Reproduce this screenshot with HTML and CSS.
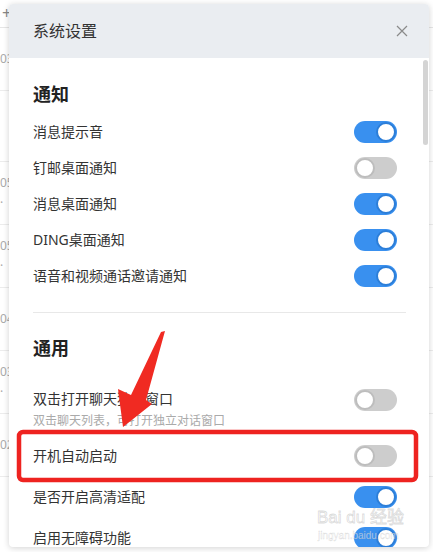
FILE: index.html
```html
<!DOCTYPE html>
<html lang="zh-CN">
<head>
    <meta charset="UTF-8">
    <meta name="viewport" content="width=device-width, initial-scale=1.0">
    <title>系统设置</title>
    <link rel="stylesheet" href="styles.css">
</head>
<body>
    <div class="backdrop">
        <div class="bg-top"><span class="plus">+</span></div>
        <div class="bg-item"><span>03</span></div>
        <div class="bg-item tall"></div>
        <div class="bg-item"><span>05</span><span>·</span></div>
        <div class="bg-item"><span>05</span><span>·</span></div>
        <div class="bg-item"><span>04</span></div>
        <div class="bg-item"><span>03</span><span>·</span></div>
        <div class="bg-item"><span>02</span></div>
    </div>

    <div class="dialog">
        <div class="dialog-head">
            <span class="title">系统设置</span>
            <svg class="close" width="12" height="12" viewBox="0 0 12 12">
                <path d="M1 1 L11 11 M11 1 L1 11" stroke="#8a8a8a" stroke-width="1.2" fill="none"/>
            </svg>
        </div>
        <div class="dialog-body">
            <div class="thumb"></div>

            <section class="group">
                <h3>通知</h3>
                <div class="row"><span>消息提示音</span><i class="switch on"><b></b></i></div>
                <div class="row"><span>钉邮桌面通知</span><i class="switch"><b></b></i></div>
                <div class="row"><span>消息桌面通知</span><i class="switch on"><b></b></i></div>
                <div class="row"><span>DING桌面通知</span><i class="switch on"><b></b></i></div>
                <div class="row"><span>语音和视频通话邀请通知</span><i class="switch on"><b></b></i></div>
            </section>

            <hr class="divider">

            <section class="group general">
                <h3>通用</h3>
                <div class="row double">
                    <div class="label">
                        <span>双击打开聊天独立窗口</span>
                        <small>双击聊天列表，可打开独立对话窗口</small>
                    </div>
                    <i class="switch"><b></b></i>
                </div>
                <div class="row wide"><span>开机自动启动</span><i class="switch"><b></b></i></div>
                <div class="row wide"><span>是否开启高清适配</span><i class="switch on"><b></b></i></div>
                <div class="row wide last"><span>启用无障碍功能</span><i class="switch on"><b></b></i></div>
            </section>
        </div>
    </div>

    <svg class="marks" width="433" height="552" viewBox="0 0 433 552">
        <rect x="19" y="432" width="397" height="48" rx="4" fill="none" stroke="#ee2320" stroke-width="4.5"/>
        <polygon points="165,331 146,400 152,404 123,427 118,389 131,395 161,332" fill="#f02a22"/>
        <text x="317" y="523" class="wm">Bai du 经验</text>
        <text x="318" y="539" class="wm small">jingyan.baidu.com</text>
    </svg>
</body>
</html>
```

FILE: styles.css
```css
body{
    margin:0;
    width:433px;
    height:552px;
    overflow:hidden;
    position:relative;
    background:#fff;
    font-family:"Noto Sans","Noto Sans CJK SC",sans-serif;
    color:#333;
}

/* page behind the dialog */
.backdrop{
    display:flex;
    flex-direction:column;
    width:433px;
    height:552px;
}
.bg-top{
    height:27px;
    border-bottom:1px solid #e6e6e6;
    color:#888;
    font-size:16px;
    line-height:27px;
    padding-left:2px;
}
.bg-item{
    height:62px;
    border-bottom:1px solid #ececec;
    display:flex;
    flex-direction:column;
    justify-content:center;
    gap:6px;
    font-size:12px;
    line-height:14px;
    color:#aaa;
}
.bg-item.tall{
    height:70px;
}

/* dialog */
.dialog{
    position:absolute;
    left:9px;
    top:4px;
    width:420px;
    height:543px;
    background:#fff;
    border-radius:4px;
    box-shadow:0 1px 6px rgba(0,0,0,.18);
    overflow:hidden;
    display:flex;
    flex-direction:column;
}
.dialog-head{
    height:54px;
    flex:none;
    background:#eaedf1;
    display:flex;
    align-items:center;
    justify-content:space-between;
    padding:0 21px 0 24px;
}
.title{
    font-size:16px;
    line-height:20px;
    color:#333;
}
.dialog-body{
    position:relative;
    padding:22px 23px 0 24px;
}
.thumb{
    position:absolute;
    right:1px;
    top:2px;
    width:5px;
    height:85px;
    border-radius:3px;
    background:#d4d4d4;
}

.group h3{
    margin:0 0 6px;
    font-size:18px;
    line-height:28px;
    font-weight:bold;
    color:#222;
}
.general h3{
    margin-bottom:14px;
}
.row{
    display:flex;
    align-items:center;
    justify-content:space-between;
    padding:7px 9px 7px 0;
    font-size:14px;
    line-height:20px;
}
.row.wide{
    padding:10px 9px 9px 0;
}
.row.last{
    line-height:16px;
}
.row.double{
    padding:13px 9px 5px 0;
    align-items:flex-start;
}
.label{
    display:flex;
    flex-direction:column;
    gap:3px;
}
.label small{
    font-size:12px;
    line-height:18px;
    color:#aaa;
}
.divider{
    border:0;
    border-top:1px solid #e8e8e8;
    margin:18px 0 21px;
}

/* switches */
.switch{
    width:43px;
    height:22px;
    box-sizing:border-box;
    border-radius:11px;
    background:#cdcdcd;
    display:flex;
    align-items:center;
    padding:0 1px;
    flex:none;
}
.switch b{
    width:20px;
    height:20px;
    box-sizing:border-box;
    border-radius:50%;
    background:#fff;
    border:2px solid #bdbdbd;
}
.switch.on{
    background:#3990ef;
    justify-content:flex-end;
}
.switch.on b{
    border-color:#2c7ed8;
}

/* annotation on top */
.marks{
    position:absolute;
    left:0;
    top:0;
    pointer-events:none;
}
.wm{
    font-family:"Liberation Sans","Noto Sans CJK SC",sans-serif;
    font-size:17px;
    fill:rgba(255,255,255,.55);
    stroke:rgba(150,150,150,.35);
    stroke-width:.8;
}
.wm.small{
    font-size:10px;
    stroke-width:.4;
}
```
